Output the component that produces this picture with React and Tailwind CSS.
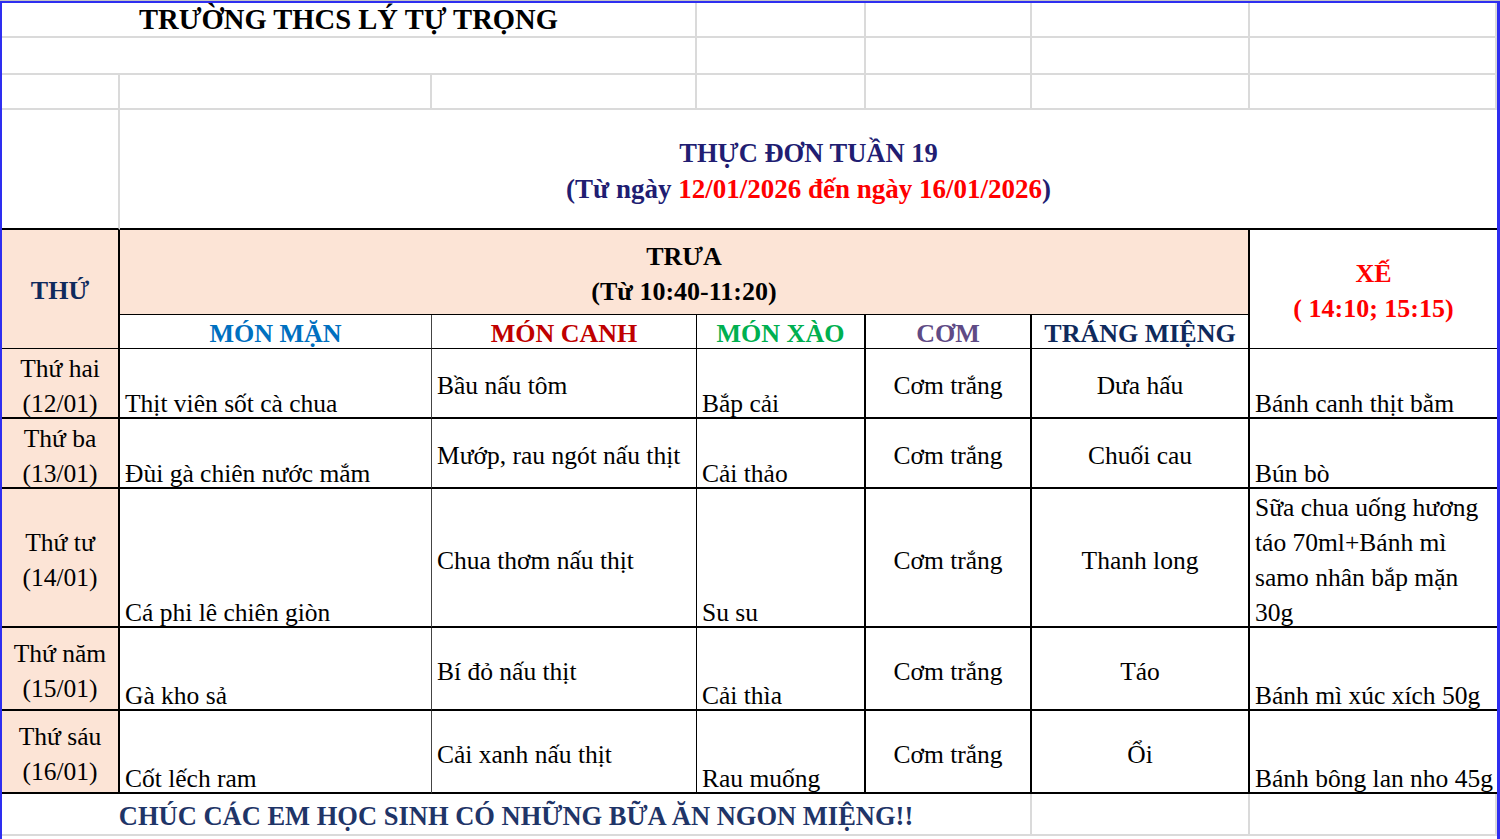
const peach = "bg-[#fce4d6]"

const menu = [
  { day: "Thứ hai", date: "(12/01)", man: "Thịt viên sốt cà chua", canh: "Bầu nấu tôm", xao: "Bắp cải", com: "Cơm trắng", trang: "Dưa hấu", xe: ["Bánh canh thịt bằm"] },
  { day: "Thứ ba", date: "(13/01)", man: "Đùi gà chiên nước mắm", canh: "Mướp, rau ngót nấu thịt", xao: "Cải thảo", com: "Cơm trắng", trang: "Chuối cau", xe: ["Bún bò"] },
  { day: "Thứ tư", date: "(14/01)", man: "Cá phi lê chiên giòn", canh: "Chua thơm nấu thịt", xao: "Su su", com: "Cơm trắng", trang: "Thanh long", xe: ["Sữa chua uống hương", "táo 70ml+Bánh mì", "samo nhân bắp mặn", "30g"] },
  { day: "Thứ năm", date: "(15/01)", man: "Gà kho sả", canh: "Bí đỏ nấu thịt", xao: "Cải thìa", com: "Cơm trắng", trang: "Táo", xe: ["Bánh mì xúc xích 50g"] },
  { day: "Thứ sáu", date: "(16/01)", man: "Cốt lếch ram", canh: "Cải xanh nấu thịt", xao: "Rau muống", com: "Cơm trắng", trang: "Ổi", xe: ["Bánh bông lan nho 45g"] },
]

// plain excel gridline cell
function Grid({ className = "", children }) {
  return <div className={`border-r-2 border-b-2 border-[#dadada] ${className}`}>{children}</div>
}

function Head({ color, className = "", children }) {
  return (
    <div className={`flex items-center justify-center pt-[5px] border-b border-b-black font-bold text-[26px] leading-none whitespace-nowrap ${color} ${className}`}>
      {children}
    </div>
  )
}

export default function App() {
  return (
    <div className="w-[1500px] h-[839px] overflow-hidden bg-white border-t border-[#c4c4c4] font-serif text-black">
      <div className="border-t-2 border-l-2 border-r-[3px] border-[#2e2ef0] h-full font-['Liberation_Serif',serif]">
        <div className="grid grid-cols-[118px_312px_265px_169px_166px_218px_247px] grid-rows-[35px_37px_35px_120px_85px_34px_70px_70px_139px_83px_83px_42px]">
          {/* row 1 */}
          <Grid className="col-span-3 flex items-center justify-center pt-[2px]">
            <span className="font-bold text-[28.6px] leading-none">TRƯỜNG THCS LÝ TỰ TRỌNG</span>
          </Grid>
          <Grid />
          <Grid />
          <Grid />
          <Grid className="border-r-0" />

          {/* row 2 */}
          <Grid className="col-span-3" />
          <Grid />
          <Grid />
          <Grid />
          <Grid className="border-r-0" />

          {/* row 3 */}
          <Grid />
          <Grid />
          <Grid />
          <Grid />
          <Grid />
          <Grid />
          <Grid className="border-r-0" />

          {/* row 4 - title block */}
          <div className="border-r-2 border-r-[#dadada] border-b-2 border-b-black" />
          <div className="col-span-6 border-b-2 border-b-black flex flex-col items-center justify-center pt-[4px] font-bold leading-[36px] text-[#211d72]">
            <div className="text-[26.5px]">THỰC ĐƠN TUẦN 19</div>
            <div className="text-[27px]">
              (Từ ngày <span className="text-[#ff0000]">12/01/2026 đến ngày 16/01/2026</span>)
            </div>
          </div>

          {/* row 5/6 - headers */}
          <div className={`row-span-2 ${peach} border-r-2 border-r-black border-b border-b-black flex items-center justify-center pt-[2px] font-bold text-[26px] text-[#0f2a5c]`}>
            THỨ
          </div>
          <div className={`col-span-5 ${peach} border-r-2 border-r-black border-b border-b-black flex flex-col items-center justify-center pt-[4px] font-bold text-[26px] leading-[35px]`}>
            <div>TRƯA</div>
            <div>(Từ 10:40-11:20)</div>
          </div>
          <div className="row-span-2 border-b border-b-black flex flex-col items-center justify-center pt-[4px] font-bold text-[26px] leading-[35px] text-[#ff0000]">
            <div>XẾ</div>
            <div>( 14:10; 15:15)</div>
          </div>
          <Head color="text-[#0070c0]" className="border-r border-r-[#444]">MÓN MẶN</Head>
          <Head color="text-[#c00000]" className="border-r border-r-black">MÓN CANH</Head>
          <Head color="text-[#00b050]" className="border-r-2 border-r-black">MÓN XÀO</Head>
          <Head color="text-[#5f4b85]" className="border-r-2 border-r-black">CƠM</Head>
          <Head color="text-[#0f2a5c]" className="border-r-2 border-r-black">TRÁNG MIỆNG</Head>

          {/* data rows */}
          {menu.map((r) => (
            <Row key={r.day} r={r} />
          ))}

          {/* footer */}
          <div className="col-span-5 border-r-2 border-b-2 border-[#dadada] flex items-center justify-center pt-[5px] font-bold text-[26.5px] leading-none text-[#1f3568] whitespace-nowrap">
            CHÚC CÁC EM HỌC SINH CÓ NHỮNG BỮA ĂN NGON MIỆNG!!
          </div>
          <Grid />
          <Grid className="border-r-0" />
        </div>
      </div>
    </div>
  )
}

function Row({ r }) {
  const base = "border-b-2 border-b-black text-[25.5px] leading-[35px] whitespace-nowrap"
  return (
    <>
      <div className={`${base} ${peach} border-r-2 border-r-black flex flex-col items-center justify-center pt-[5px]`}>
        <div>{r.day}</div>
        <div>{r.date}</div>
      </div>
      <div className={`${base} border-r border-r-[#444] flex items-end pl-[5px]`}>
        <div className="-mb-1">{r.man}</div>
      </div>
      <div className={`${base} border-r border-r-black flex items-center pl-[5px] pt-[5px]`}>{r.canh}</div>
      <div className={`${base} border-r-2 border-r-black flex items-end pl-[5px]`}>
        <div className="-mb-1">{r.xao}</div>
      </div>
      <div className={`${base} border-r-2 border-r-black flex items-center justify-center pt-[5px]`}>{r.com}</div>
      <div className={`${base} border-r-2 border-r-black flex items-center justify-center pt-[5px]`}>{r.trang}</div>
      <div className={`${base} flex items-end pl-[5px]`}>
        <div className="-mb-1">
          {r.xe.map((line) => (
            <div key={line}>{line}</div>
          ))}
        </div>
      </div>
    </>
  )
}
